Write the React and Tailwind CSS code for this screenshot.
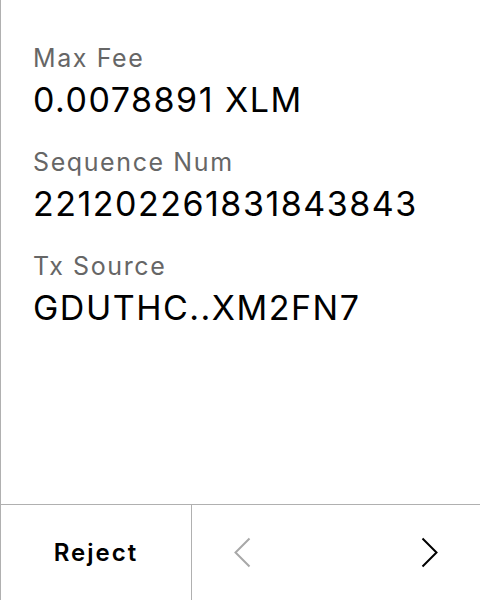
import React from "react";

function Field({ label, value }) {
  return (
    <div className="flex flex-col">
      <div className="text-[25px] leading-[32px] tracking-[1.6px] text-[#666666]">{label}</div>
      <div className="mt-1.5 text-[34px] leading-[40px] tracking-[1.5px] text-black">{value}</div>
    </div>
  );
}

export default function App() {
  return (
    <div
      className="w-[480px] h-[600px] flex flex-col bg-white border-l border-[#b0b0b0]"
      style={{ fontFamily: "Inter, 'Noto Sans', sans-serif" }}
    >
      <div className="flex-1 flex flex-col gap-[26px] pl-[32px] pt-[42px]">
        <Field label="Max Fee" value="0.0078891 XLM" />
        <Field label="Sequence Num" value="221202261831843843" />
        <Field label="Tx Source" value="GDUTHC..XM2FN7" />
      </div>
      <div className="h-[96px] flex border-t border-[#b0b0b0]">
        <div className="w-[191px] flex items-center justify-center border-r border-[#b0b0b0]">
          <span className="text-[24px] font-semibold tracking-[2px] text-black">Reject</span>
        </div>
        <div className="flex-1 flex items-center justify-between px-[42px]">
          <svg width="17" height="31" viewBox="0 0 17 31" fill="none">
            <polyline points="15.5,1.5 1.5,15.5 15.5,29.5" stroke="#a8a8a8" strokeWidth="2" />
          </svg>
          <svg width="17" height="31" viewBox="0 0 17 31" fill="none">
            <polyline points="1.5,1.5 15.5,15.5 1.5,29.5" stroke="#000000" strokeWidth="2" />
          </svg>
        </div>
      </div>
    </div>
  );
}
